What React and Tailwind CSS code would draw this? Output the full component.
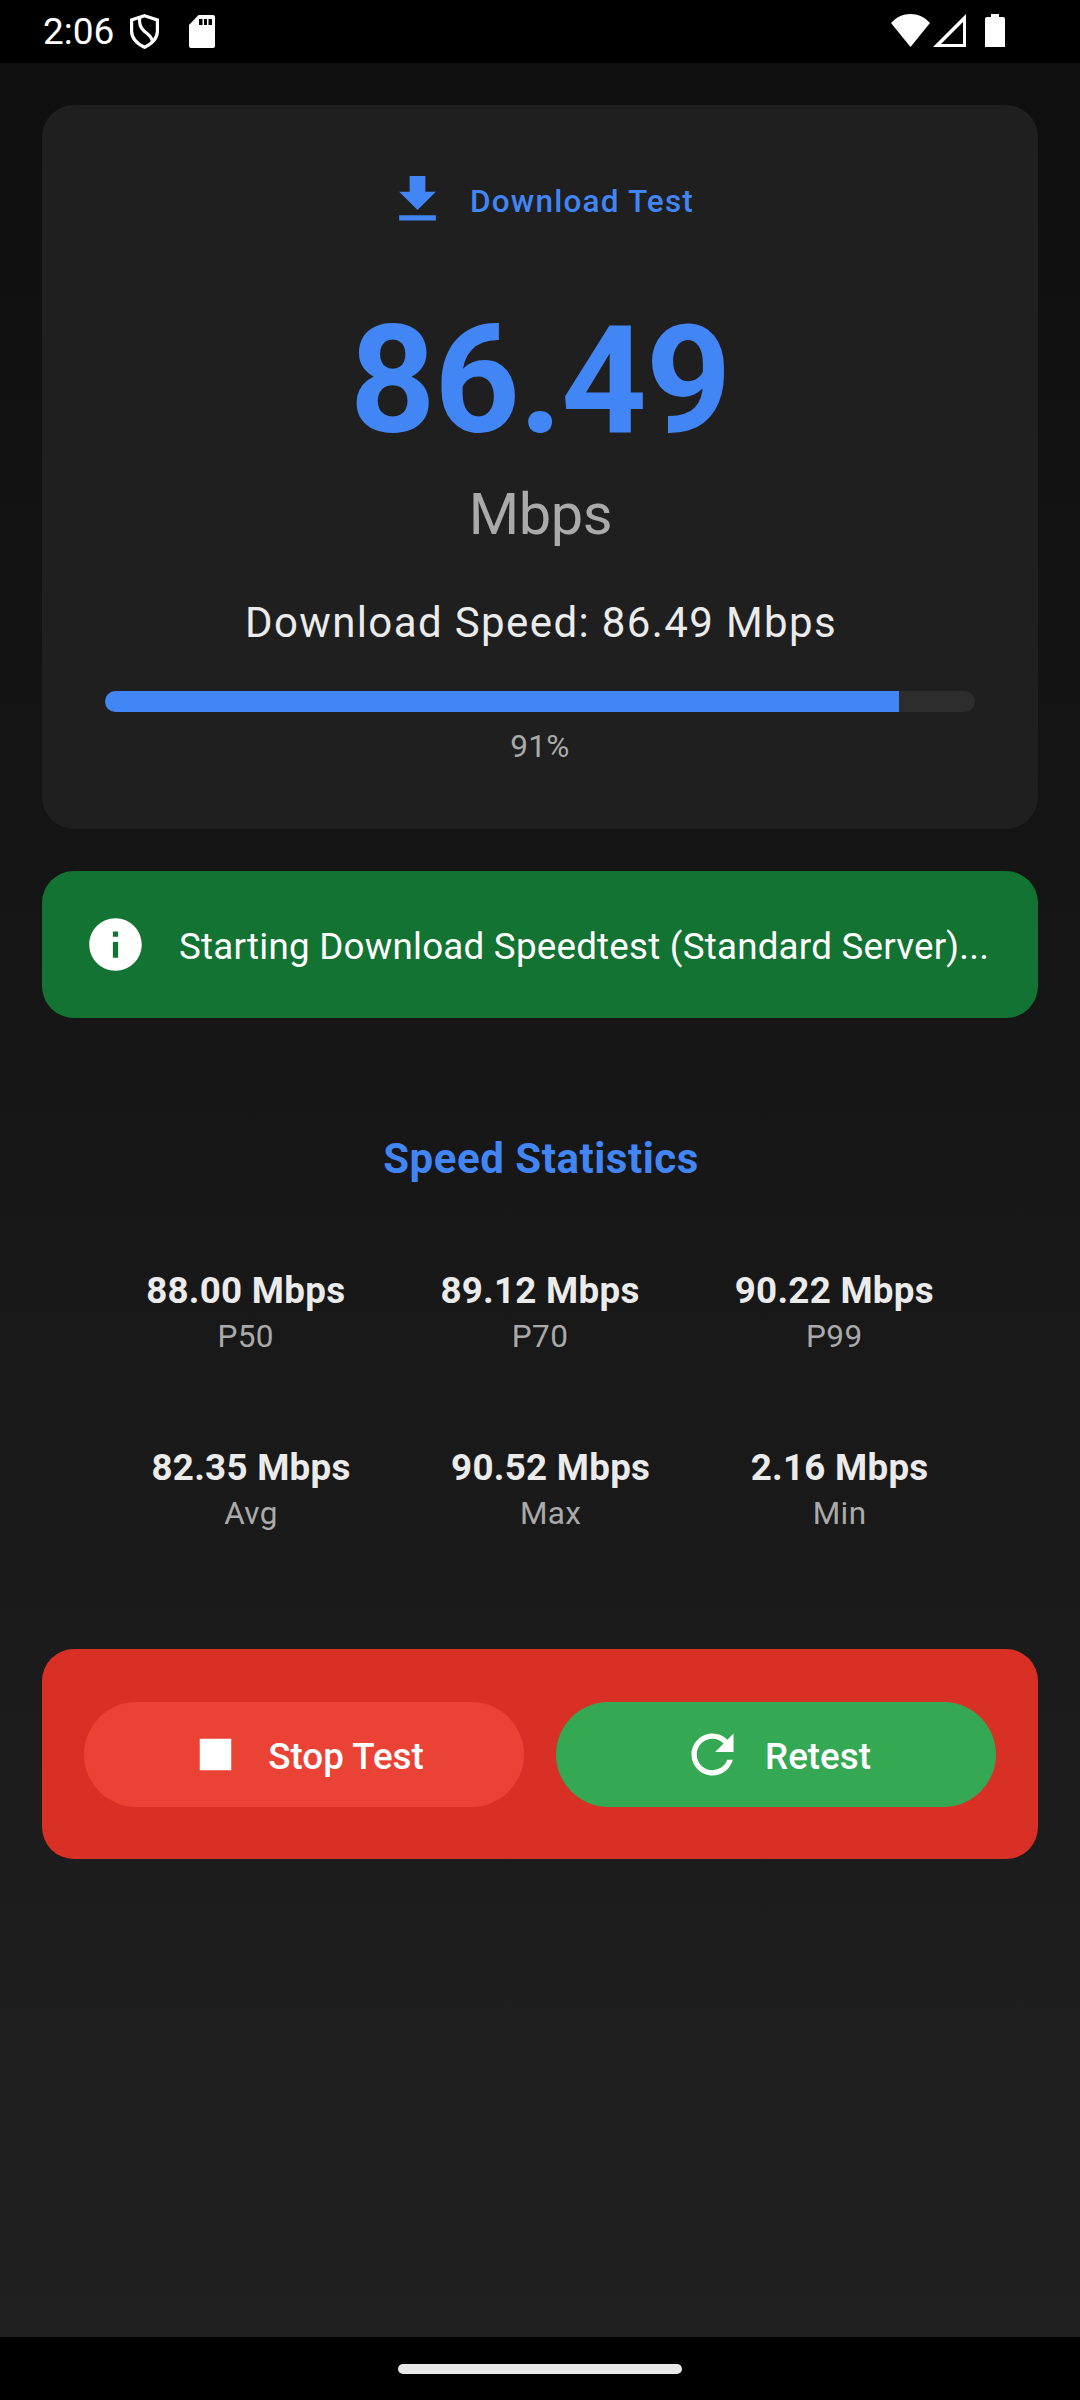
import { MdDownload, MdInfo, MdRefresh, MdStop } from 'react-icons/md'

const progress = 91.3

// percentile row and summary row
const statRows = [
  [
    { label: 'P50', value: '88.00 Mbps' },
    { label: 'P70', value: '89.12 Mbps' },
    { label: 'P99', value: '90.22 Mbps' },
  ],
  [
    { label: 'Avg', value: '82.35 Mbps' },
    { label: 'Max', value: '90.52 Mbps' },
    { label: 'Min', value: '2.16 Mbps' },
  ],
]

function StatusBar() {
  return (
    <header className="flex h-[63px] shrink-0 items-start bg-black text-white">
      <span className="ml-[43px] mt-[10px] w-[87px] text-[37px] leading-[43px]">2:06</span>

      {/* shield */}
      <svg className="mt-[14px] h-[35px] w-[29px]" viewBox="0 0 29 35" fill="none" stroke="currentColor" strokeWidth="3.2">
        <path d="M14.5 1.700 27.400 6v11c0 7-5.400 12.700-12.900 16.300C7 29.700 1.600 24 1.600 17V6z" />
        <path d="M9.800 3C8.800 9 9.500 13 14 17s7.500 5 8.500 10.500" />
      </svg>

      {/* sd card */}
      <svg className="ml-[30px] mt-[15px] h-[33px] w-[26px]" viewBox="0 0 26 33">
        <path d="M9.500 0H24a2 2 0 0 1 2 2v29a2 2 0 0 1-2 2H2a2 2 0 0 1-2-2V10z" fill="currentColor" />
        <path d="M10 4h3.500v6H10zM15 4h3v6h-3zM19.500 4H23v6h-3.500z" fill="#000" />
      </svg>

      <div className="ml-auto mr-[75px] flex items-start">
        {/* wifi */}
        <svg className="mt-[14px] h-[33px] w-[39px]" viewBox="0 0 39 33" fill="currentColor">
          <path d="M19.500 33 0 9C5.500 3 12 0 19.500 0S33.500 3 39 9z" />
        </svg>
        {/* empty signal */}
        <svg className="ml-[3px] mt-[14px] h-[33px] w-[33px]" viewBox="0 0 33 33" fill="currentColor">
          <path fillRule="evenodd" d="M33 0v33H0zM30 8 8 30h22z" />
        </svg>
        {/* battery */}
        <svg className="ml-[19px] mt-[14px] h-[33px] w-[20px]" viewBox="0 0 20 33" fill="currentColor">
          <path d="M6 0h8v3h4a2 2 0 0 1 2 2v28H0V5a2 2 0 0 1 2-2h4z" />
        </svg>
      </div>
    </header>
  )
}

function ResultCard() {
  return (
    <section className="flex h-[724px] flex-col items-center rounded-[32px] bg-[#1f1f1f] p-[63px]">
      <div className="flex h-[63px] items-center gap-[21px] text-[#4285f4]">
        <MdDownload className="size-[63px]" />
        <span className="mt-[5px] text-[31.5px] font-medium leading-[42px] tracking-[1.2px]">Download Test</span>
      </div>

      <p className="mt-[66px] text-[149.6px] font-bold leading-[168px] tracking-[-1.2px] text-[#4285f4]">86.49</p>
      <p className="mt-[12px] pl-[1px] text-[57.75px] leading-[74px] tracking-[-0.4px] text-[#aaaaaa]">Mbps</p>
      <p className="mt-[40px] pl-[2px] text-[42px] leading-[63px] tracking-[1.38px] text-[#ebebeb]">
        Download Speed: 86.49 Mbps
      </p>

      <div className="mt-[37px] h-[21px] w-[870px] shrink-0 overflow-hidden rounded-full bg-[#2d2d2d]">
        <div className="h-full bg-[#4285f4]" style={{ width: `${progress}%` }} />
      </div>
      <p className="mt-[14px] text-[31.5px] leading-[42px] tracking-[0.4px] text-[#aaaaaa]">91%</p>
    </section>
  )
}

function Banner() {
  return (
    <section className="mt-[42px] flex h-[147px] items-center gap-[32px] rounded-[32px] bg-[#137333] px-[42px] text-white">
      <MdInfo className="size-[63px] shrink-0" />
      <span className="mt-[4px] whitespace-nowrap text-[36.75px] leading-[53px] tracking-[0.22px]">
        Starting Download Speedtest (Standard Server)...
      </span>
    </section>
  )
}

function Statistics() {
  return (
    <section className="mt-[109px] flex flex-col items-center">
      <h2 className="pl-[2px] text-[42px] font-bold leading-[63px] tracking-[0.53px] text-[#4285f4]">
        Speed Statistics
      </h2>
      <div className="mt-[74px] flex w-[978px] flex-col gap-[83px]">
        {statRows.map((row) => (
          <div key={row[0].label} className="flex justify-evenly">
            {row.map((stat) => (
              <div key={stat.label} className="flex flex-col items-center">
                <span className="text-[36.75px] font-bold leading-[53px] tracking-[0.26px] text-[#ebebeb]">
                  {stat.value}
                </span>
                <span className="mt-[-2px] text-[31.5px] leading-[43px] tracking-[0.4px] text-[#aaaaaa]">
                  {stat.label}
                </span>
              </div>
            ))}
          </div>
        ))}
      </div>
    </section>
  )
}

function Actions() {
  return (
    <section className="mt-[114px] flex h-[210px] items-center gap-[32px] rounded-[32px] bg-[#d93025] px-[42px] text-[36.75px] font-medium leading-[53px] tracking-[0.02px] text-white">
      <button className="flex h-[105px] flex-1 items-center justify-center gap-[21px] rounded-full bg-[#ea4335]">
        <MdStop className="size-[63px]" />
        <span className="mt-[4px]">Stop Test</span>
      </button>
      <button className="flex h-[105px] flex-1 items-center justify-center gap-[21px] rounded-full bg-[#34a853]">
        <MdRefresh className="size-[63px]" />
        <span className="mt-[4px]">Retest</span>
      </button>
    </section>
  )
}

export default function App() {
  return (
    <div className="flex h-[2400px] w-[1080px] flex-col bg-black font-['Roboto',sans-serif]">
      <StatusBar />
      <main className="flex-1 bg-linear-to-b from-[#0f0f0f] to-[#202020] px-[42px] pt-[42px]">
        <ResultCard />
        <Banner />
        <Statistics />
        <Actions />
      </main>
      {/* gesture bar */}
      <footer className="flex h-[63px] shrink-0 justify-center bg-black pt-[27px]">
        <div className="h-[10px] w-[284px] rounded-full bg-[#e8e8e8]" />
      </footer>
    </div>
  )
}
